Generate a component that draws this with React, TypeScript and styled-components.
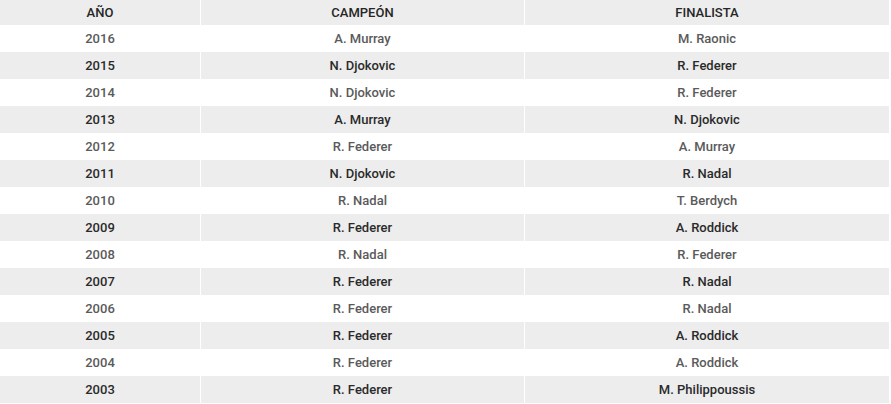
import React from "react";
import styled, { createGlobalStyle } from "styled-components";

const Global = createGlobalStyle`
  html, body { margin: 0; padding: 0; background: #fff; }
  body { font-family: Roboto, "Liberation Sans", Arial, sans-serif; }
`;

const Table = styled.table`
  width: 887px;
  border-collapse: collapse;
  table-layout: fixed;
  font-family: Roboto, "Liberation Sans", Arial, sans-serif;
  font-size: 13px;
  font-weight: 500;
`;

const Head = styled.th<{ $w: number }>`
  width: ${(p) => p.$w}px;
  height: 25px;
  padding: 0;
  background: #ededed;
  color: #262626;
  font-weight: 500;
  text-align: center;
  vertical-align: middle;
  border-left: 1px solid #fff;
  &:first-child { border-left: none; }
`;

const Row = styled.tr<{ $striped: boolean }>`
  background: ${(p) => (p.$striped ? "#ededed" : "#ffffff")};
  color: ${(p) => (p.$striped ? "#2a2a2a" : "#5a5a5a")};
`;

const Cell = styled.td`
  height: 27px;
  padding: 0;
  text-align: center;
  vertical-align: middle;
  border-left: 1px solid #fff;
  &:first-child { border-left: none; }
`;

const rows: [string, string, string][] = [
  ["2016", "A. Murray", "M. Raonic"],
  ["2015", "N. Djokovic", "R. Federer"],
  ["2014", "N. Djokovic", "R. Federer"],
  ["2013", "A. Murray", "N. Djokovic"],
  ["2012", "R. Federer", "A. Murray"],
  ["2011", "N. Djokovic", "R. Nadal"],
  ["2010", "R. Nadal", "T. Berdych"],
  ["2009", "R. Federer", "A. Roddick"],
  ["2008", "R. Nadal", "R. Federer"],
  ["2007", "R. Federer", "R. Nadal"],
  ["2006", "R. Federer", "R. Nadal"],
  ["2005", "R. Federer", "A. Roddick"],
  ["2004", "R. Federer", "A. Roddick"],
  ["2003", "R. Federer", "M. Philippoussis"],
];

export default function App() {
  return (
    <>
      <Global />
      <Table>
        <thead>
          <tr>
            <Head $w={200}>AÑO</Head>
            <Head $w={323}>CAMPEÓN</Head>
            <Head $w={364}>FINALISTA</Head>
          </tr>
        </thead>
        <tbody>
          {rows.map((r, i) => (
            <Row key={r[0]} $striped={i % 2 === 1}>
              <Cell>{r[0]}</Cell>
              <Cell>{r[1]}</Cell>
              <Cell>{r[2]}</Cell>
            </Row>
          ))}
        </tbody>
      </Table>
    </>
  );
}
